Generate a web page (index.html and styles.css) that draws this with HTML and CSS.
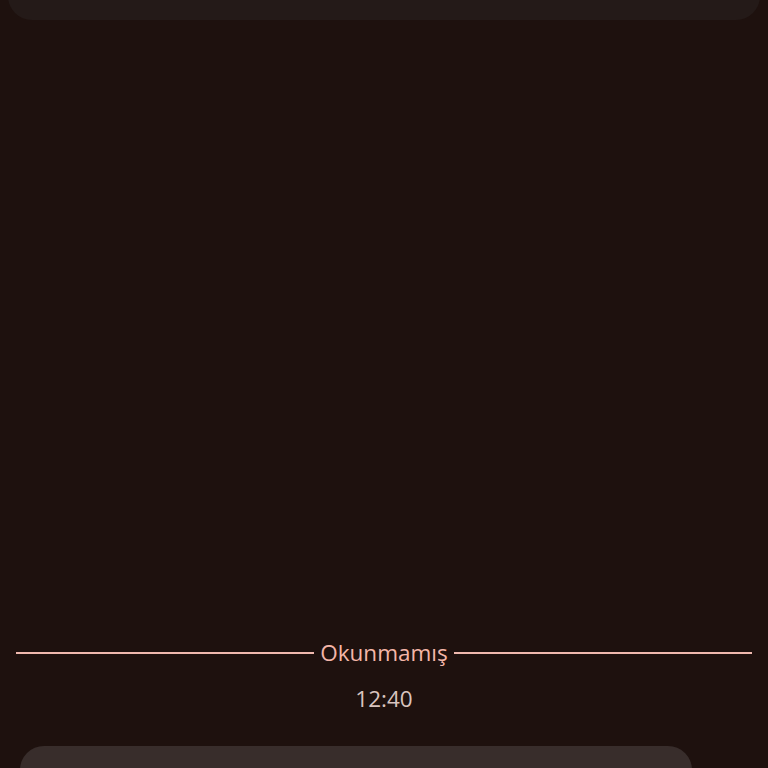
FILE: index.html
```html
<!DOCTYPE html>
<html lang="tr">
<head>
<meta charset="utf-8">
<link rel="stylesheet" href="styles.css">
</head>
<body>
<div class="screen">
  <div class="card-top"></div>
  <div class="divider">
    <span class="line"></span>
    <span class="label">Okunmamış</span>
    <span class="line"></span>
  </div>
  <div class="time">12:40</div>
  <div class="card-bottom"></div>
</div>
</body>
</html>
```
FILE: styles.css
```css
html, body {
  margin: 0;
  padding: 0;
  background: #1e110e;
}
.screen {
  width: 768px;
  height: 768px;
  overflow: hidden;
  display: flex;
  flex-direction: column;
  font-family: "Open Sans", Roboto, sans-serif;
}
.card-top {
  margin: -30px 8px 0 8px;
  height: 50px;
  background: #241a18;
  border-radius: 24px;
  flex: none;
}
.divider {
  margin: 619px 16px 0 16px;
  height: 28px;
  display: flex;
  align-items: center;
  gap: 6px;
  flex: none;
}
.line {
  flex: 1;
  height: 2px;
  background: #f0b9ae;
}
.label {
  font-size: 22.5px;
  line-height: 28px;
  color: #f4b6a8;
}
.time {
  margin-top: 18px;
  text-align: center;
  font-size: 22.5px;
  line-height: 28px;
  color: #d9c4bf;
  flex: none;
}
.card-bottom {
  margin: 33px 0 0 20px;
  width: 672px;
  height: 60px;
  background: #382d2b;
  border-radius: 24px;
  flex: none;
}
```
